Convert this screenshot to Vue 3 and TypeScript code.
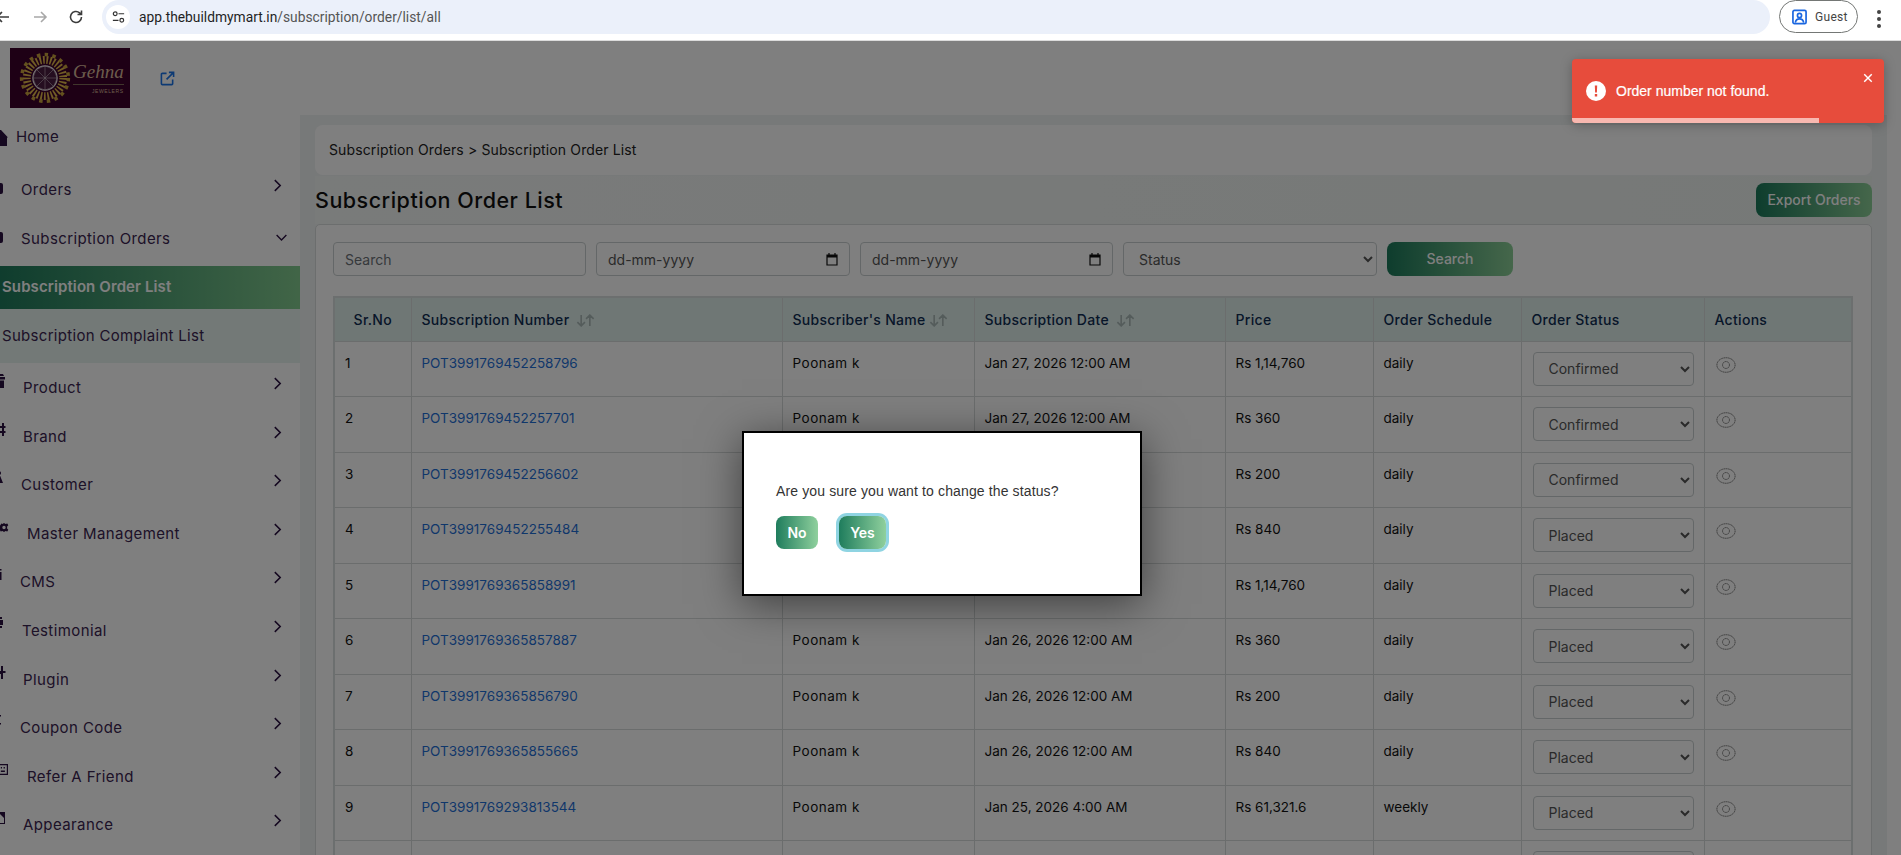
<script setup lang="ts">
interface Row { no: number; num: string; name: string; date: string; price: string; sched: string; status: string }
const rows: Row[] = [
  { no: 1, num: 'POT3991769452258796', name: 'Poonam k', date: 'Jan 27, 2026 12:00 AM', price: 'Rs 1,14,760', sched: 'daily', status: 'Confirmed' },
  { no: 2, num: 'POT3991769452257701', name: 'Poonam k', date: 'Jan 27, 2026 12:00 AM', price: 'Rs 360', sched: 'daily', status: 'Confirmed' },
  { no: 3, num: 'POT3991769452256602', name: '', date: '', price: 'Rs 200', sched: 'daily', status: 'Confirmed' },
  { no: 4, num: 'POT3991769452255484', name: '', date: '', price: 'Rs 840', sched: 'daily', status: 'Placed' },
  { no: 5, num: 'POT3991769365858991', name: '', date: '', price: 'Rs 1,14,760', sched: 'daily', status: 'Placed' },
  { no: 6, num: 'POT3991769365857887', name: 'Poonam k', date: 'Jan 26, 2026 12:00 AM', price: 'Rs 360', sched: 'daily', status: 'Placed' },
  { no: 7, num: 'POT3991769365856790', name: 'Poonam k', date: 'Jan 26, 2026 12:00 AM', price: 'Rs 200', sched: 'daily', status: 'Placed' },
  { no: 8, num: 'POT3991769365855665', name: 'Poonam k', date: 'Jan 26, 2026 12:00 AM', price: 'Rs 840', sched: 'daily', status: 'Placed' },
  { no: 9, num: 'POT3991769293813544', name: 'Poonam k', date: 'Jan 25, 2026 4:00 AM', price: 'Rs 61,321.6', sched: 'weekly', status: 'Placed' },
]
const menuA = [
  { label: 'Product', cls: 'i23', icon: 'M-6 3h11v2.500H-6zM-6 6.500H4V14H-6zM-4 0H3l1 2h-8z' },
  { label: 'Brand', cls: 'i23', icon: 'M2 0h2v3h1.500v2H4v3h1.500v2H4v3H2v-3H-3V8h5V5h-5V3h5z' },
  { label: 'Customer', cls: 'i21', icon: 'M-1 0a1.800 1.800 0 1 1 0 4 1.800 1.800 0 0 1 0-4zM-3 12l2-7h1.200L3 12z' },
  { label: 'Master Management', cls: 'i27', icon: 'M4 3l1.500 1 1.800-.4 1 1.700-1.200 1.300v1.800l1.200 1.300-1 1.700-1.800-.4L4 12l-1.500-1-1.800.4-1-1.700L-1 8.400V6.600L.3 5.300l1-1.700 1.200.4zM4 5.800a1.700 1.700 0 1 0 0 3.400 1.700 1.700 0 0 0 0-3.400z' },
  { label: 'CMS', cls: 'i20', icon: 'M-2 1h3.500v1.500H-2zM-2 4h3.500v8H-2z' },
  { label: 'Testimonial', cls: 'i22', icon: 'M-3 3h6v5H-3zM0 0h2v2H0zM0 9h2v2H0z' },
  { label: 'Plugin', cls: 'i23', icon: 'M1 0h2v5h2.500v2H3v6H1V8H-3V5h4z' },
  { label: 'Coupon Code', cls: 'i20', icon: 'M-2 1h3v1.500h-3zM-2 5h2v1.500h-2zM-2 9h3v1.500h-3z' },
  { label: 'Refer A Friend', cls: 'i27', icon: 'M-2 1h10v11H-2zM-.8 2.200v8.600h7.600V2.200zM.8 4H2v1.500H.8zM3.600 4h1.300v1.500H3.600zM.8 7.500h4.100V9H.8z' },
  { label: 'Appearance', cls: 'i23', icon: 'M-5 1H5v12H-5zM-4 7l4-4 4 4v5h-8z' },
]
const heads = ['Subscription Number', "Subscriber's Name", 'Subscription Date']
</script>

<template>
  <div class="root">
    <div class="chrome">
      <svg class="nav back" viewBox="0 0 16 16"><path d="M14 8H2M7 3 2 8l5 5" /></svg>
      <svg class="nav fwd" viewBox="0 0 16 16"><path d="M2 8h12M9 3l5 5-5 5" /></svg>
      <svg class="nav reload" viewBox="0 0 16 16"><path d="M13.500 8A5.500 5.500 0 1 1 11.600 3.800L13.500 5.500M13.500 1.500v4h-4" /></svg>
      <div class="pill">
        <span class="tune">
          <svg viewBox="0 0 16 16"><circle cx="4.500" cy="4" r="2" /><path d="M8 4h6M2 11h6" /><circle cx="11.500" cy="11" r="2" /></svg>
        </span>
        <span class="url"><b>app.thebuildmymart.in</b>/subscription/order/list/all</span>
      </div>
      <div class="guest">
        <svg viewBox="0 0 16 16"><rect x="1" y="1" width="14" height="14" rx="1.500" /><circle cx="8" cy="6.300" r="2.200" /><path d="M3.500 14c.6-3 2.400-4 4.500-4s3.900 1 4.500 4" /></svg>
        <span>Guest</span>
      </div>
      <div class="dots"><i></i><i></i><i></i></div>
    </div>

    <div class="page">
      <aside class="side">
        <div class="top">
          <div class="logo">
            <svg viewBox="0 0 60 60" class="mandala">
              <circle cx="30" cy="30" r="21" fill="none" stroke="#e0b84a" stroke-width="9" stroke-dasharray="2 2" />
              <circle cx="30" cy="30" r="27" fill="none" stroke="#c9a23c" stroke-width="4" stroke-dasharray="4 5" />
              <circle cx="30" cy="30" r="14" fill="#4a1c40" stroke="#efe6ea" stroke-width="1.300" />
              <path d="M30 16 40 20 44 30 40 40 30 44 20 40 16 30 20 20Z M20 20 40 40 M40 20 20 40 M30 16V44M16 30H44" fill="none" stroke="#d8ccd2" stroke-width=".6" />
            </svg>
            <div class="brand"><span class="gehna">Gehna</span><span class="jew">JEWELERS</span></div>
          </div>
          <svg class="ext" viewBox="0 0 16 16"><path d="M7 2.500H2.500a1 1 0 0 0-1 1v10a1 1 0 0 0 1 1h10a1 1 0 0 0 1-1V9M9.500 1.500h5v5M14.500 1.500 7 9" /></svg>
        </div>
        <div class="m home">
          <svg class="mi" viewBox="0 0 8 16"><path d="M1 0 8 7.500H7V16H-6V0z" /></svg>
          <span>Home</span>
        </div>
        <div class="m orders">
          <span class="stub"></span><span class="lb">Orders</span>
          <svg class="chev" viewBox="0 0 10 16"><path d="m2 2 6 6-6 6" /></svg>
        </div>
        <div class="m subs">
          <span class="stub"></span><span class="lb">Subscription Orders</span>
          <svg class="chev down" viewBox="0 0 16 10"><path d="m2 2 6 6 6-6" /></svg>
        </div>
        <div class="active">Subscription Order List</div>
        <div class="sub2">Subscription Complaint List</div>
        <div v-for="m in menuA" :key="m.label" class="m it" :class="m.cls">
          <svg class="mic" viewBox="0 0 12 14"><path :d="m.icon" fill-rule="evenodd" /></svg>
          <span class="lb">{{ m.label }}</span>
          <svg class="chev" viewBox="0 0 10 16"><path d="m2 2 6 6-6 6" /></svg>
        </div>
      </aside>

      <div class="right">
        <div class="rtop"></div>
        <main class="main">
          <div class="crumb">Subscription Orders &gt; Subscription Order List</div>
          <div class="titlebar">
            <h1>Subscription Order List</h1>
            <button class="grad export">Export Orders</button>
          </div>
          <section class="card">
            <div class="filters">
              <input class="fld" placeholder="Search" />
              <div class="fld date wide">dd-mm-yyyy
                <svg viewBox="0 0 12 14"><path d="M1 3h10v10H1zM3 1v2M9 1v2" /><path class="fill" d="M1 3h10v2.500H1z" /></svg>
              </div>
              <div class="fld date">dd-mm-yyyy
                <svg viewBox="0 0 12 14"><path d="M1 3h10v10H1zM3 1v2M9 1v2" /><path class="fill" d="M1 3h10v2.500H1z" /></svg>
              </div>
              <select class="fld status"><option>Status</option></select>
              <button class="grad go">Search</button>
            </div>
            <table>
              <thead>
                <tr>
                  <th class="c0 ctr">Sr.No</th>
                  <th v-for="(h, i) in heads" :key="h" :class="'c' + (i + 1)">
                    {{ h }}
                    <svg class="sort" viewBox="0 0 18 12"><path d="M5 1v10M1.500 7.500 5 11l3.500-3.500M13 11V1M9.500 4.500 13 1l3.500 3.500" /></svg>
                  </th>
                  <th class="c4">Price</th>
                  <th class="c5">Order Schedule</th>
                  <th class="c6">Order Status</th>
                  <th class="c7">Actions</th>
                </tr>
              </thead>
              <tbody>
                <tr v-for="r in rows" :key="r.no">
                  <td>{{ r.no }}</td>
                  <td><a>{{ r.num }}</a></td>
                  <td class="who">{{ r.name }}</td>
                  <td>{{ r.date }}</td>
                  <td>{{ r.price }}</td>
                  <td>{{ r.sched }}</td>
                  <td class="sel"><select><option>{{ r.status }}</option></select></td>
                  <td>
                    <svg class="eye" viewBox="0 0 22 18"><ellipse cx="11" cy="9" rx="10" ry="8" /><circle cx="11" cy="9" r="3.800" /></svg>
                  </td>
                </tr>
                <tr>
                  <td></td><td></td><td></td><td></td><td></td><td></td>
                  <td class="sel"><select><option>Placed</option></select></td>
                  <td></td>
                </tr>
              </tbody>
            </table>
          </section>
        </main>
      </div>

      <div class="backdrop"></div>

      <div class="modal">
        <p>Are you sure you want to change the status?</p>
        <div class="mbtns">
          <button class="mb no">No</button>
          <button class="mb yes">Yes</button>
        </div>
      </div>

      <div class="toast">
        <svg class="bang" viewBox="0 0 20 20"><circle cx="10" cy="10" r="10" fill="#fff" /><path d="M8.800 4.500h2.400l-.3 7H9.100zM8.800 13h2.400v2.400H8.800z" fill="#e74c3c" /></svg>
        <span>Order number not found.</span>
        <svg class="x" viewBox="0 0 12 12"><path d="m1.500 1.500 9 9M10.500 1.500l-9 9" /></svg>
        <div class="bar"></div>
      </div>
    </div>
  </div>
</template>

<style>
html, body { margin: 0; height: 100%; overflow: hidden; background: #fff; }
</style>

<style scoped>
.root { width: 1901px; height: 855px; overflow: hidden; display: flex; flex-direction: column; font-family: Inter, "Open Sans", sans-serif; color: #2a1a3a; }
.chrome { height: 40px; flex: none; display: flex; align-items: flex-start; background: #fff; border-bottom: 1px solid #dcdcdc; position: relative; }
.nav { width: 16px; height: 16px; margin-top: 9px; fill: none; stroke: #3c3c3c; stroke-width: 1.6; flex: none; }
.back { margin-left: -5px; }
.fwd { margin-left: 21px; stroke: #a8a8a8; }
.reload { margin-left: 20px; }
.pill { margin-left: 18px; width: 1668px; height: 34px; background: #ebf0fa; border-radius: 17px; display: flex; align-items: center; padding-left: 4px; box-sizing: border-box; flex: none; }
.tune { width: 24px; height: 24px; border-radius: 50%; background: #fff; display: flex; align-items: center; justify-content: center; margin-right: 9px; flex: none; }
.tune svg { width: 15px; height: 15px; fill: none; stroke: #333; stroke-width: 1.3; }
.url { font: 13.800px Roboto, sans-serif; color: #555; }
.url b { font-weight: 400; color: #1f1f1f; }
.guest { margin-left: 9px; width: 79px; height: 33px; border: 1px solid #747775; border-radius: 17px; box-sizing: border-box; display: flex; align-items: center; padding-left: 12px; gap: 8px; font: 12px Roboto, sans-serif; letter-spacing: .3px; color: #444; flex: none; }
.guest svg { width: 15px; height: 16px; fill: none; stroke: #1a66e0; stroke-width: 1.800; flex: none; }
.dots { margin-left: 19px; margin-top: 10px; display: flex; flex-direction: column; gap: 3px; }
.dots i { width: 4px; height: 4px; border-radius: 50%; background: #444; display: block; }

.page { flex: 1; display: flex; position: relative; min-height: 0; }
.side { width: 300px; flex: none; background: #fff; overflow: hidden; }
.top { height: 74px; display: flex; align-items: flex-start; }
.logo { margin: 7px 0 0 10px; width: 120px; height: 60px; background: #3c002a; display: flex; align-items: center; flex: none; }
.mandala { width: 52px; height: 52px; margin-left: 9px; flex: none; }
.brand { display: flex; flex-direction: column; align-items: flex-end; margin-left: 2px; color: #d8b898; }
.gehna { font: italic 19px/20px "Liberation Serif", serif; border-bottom: 1px solid #806c58; padding: 0 0 2px; }
.jew { font: 5px/8px "Liberation Sans", sans-serif; letter-spacing: .6px; margin-top: 2px; }
.ext { width: 15px; height: 15px; margin: 30px 0 0 30px; fill: none; stroke: #1a74e8; stroke-width: 1.700; flex: none; }

.m { position: relative; font-size: 15px; letter-spacing: .4px; line-height: 22px; color: #3b2450; }
.home { padding-left: 16px; display: flex; align-items: flex-start; padding-top: 11px; box-sizing: border-box; height: 48px; letter-spacing: .2px; }
.mi { position: absolute; left: 0; top: 15px; width: 8px; height: 16px; fill: #2a1040; }
.orders { height: 53px; padding: 16px 0 0 21px; box-sizing: border-box; }
.subs { height: 50px; padding: 12px 0 0 21px; box-sizing: border-box; }
.stub { position: absolute; left: -3px; top: 20px; width: 6px; height: 11px; border-radius: 2px; background: #2a1040; }
.subs .stub { top: 16px; }
.chev { position: absolute; left: 273px; top: 13px; width: 9px; height: 15px; fill: none; stroke: #2a1040; stroke-width: 1.700; }
.orders .chev { top: 15px; }
.chev.down { left: 275px; top: 17px; width: 13px; height: 9px; }
.active { height: 43px; background: linear-gradient(90deg, #1f7a5c, #83cb8f); color: #fff; font-weight: 600; font-size: 15px; letter-spacing: .1px; line-height: 41px; padding-left: 2px; }
.sub2 { height: 54px; background: #e6f2ee; font-size: 15px; letter-spacing: .3px; line-height: 54px; padding-left: 2px; color: #3b2450; }
.it { height: 48.600px; padding-top: 14px; box-sizing: border-box; }
.mic { position: absolute; left: 0; top: 11px; width: 12px; height: 14px; fill: #2a1040; overflow: hidden; }
.i20 { padding-left: 20px; }
.i21 { padding-left: 21px; }
.i22 { padding-left: 22px; }
.i23 { padding-left: 23px; }
.i27 { padding-left: 27px; }

.right { flex: 1; min-width: 0; display: flex; flex-direction: column; background: #fff; }
.rtop { height: 74px; flex: none; }
.main { flex: 1; min-height: 0; background: #eff3f3; padding: 10px 15px 0 15px; margin-right: 14px; }
.crumb { height: 50px; background: #fff; border-radius: 8px; padding-left: 14px; line-height: 50px; font-size: 14px; letter-spacing: .13px; color: #222; box-sizing: border-box; margin-bottom: 1px; }
.titlebar { height: 48px; display: flex; align-items: center; justify-content: space-between; background: linear-gradient(90deg, #f3f6f5, #edf2ef); }
h1 { margin: 0; font-size: 21.500px; letter-spacing: .5px; font-weight: 500; color: #111; }
.grad { border: 0; color: #fff; font-family: inherit; font-weight: 500; background: linear-gradient(90deg, #1c7a5b, #8bce96); }
.export { width: 116px; height: 34px; border-radius: 8px; font-size: 14px; padding: 0 0 2px; }
.card { background: #fff; border: 1px solid #d8dcdc; border-radius: 5px; padding: 17px 17px 0; height: 700px; box-sizing: border-box; }
.filters { display: flex; gap: 10px; height: 34px; }
.fld { box-sizing: border-box; width: 253px; height: 34px; border: 1px solid #c9ced0; border-radius: 4px; background: #fff; font-family: inherit; font-size: 14px; color: #555; padding: 0 11px; flex: none; outline: 0; }
.fld::placeholder { color: #6d7278; }
.date { display: flex; align-items: center; justify-content: space-between; }
.wide { width: 254px; }
.date svg { width: 12px; height: 14px; fill: none; stroke: #111; stroke-width: 1.200; }
.date .fill { fill: #111; stroke: none; }
.status { width: 254px; }
.go { width: 126px; height: 34px; border-radius: 8px; font-size: 14px; padding: 0 0 1px; }
table { margin-top: 20px; width: 1520px; border-collapse: collapse; table-layout: fixed; font-size: 13.500px; border: 2px solid #d9dede; }
th, td { border: 1px solid #d6dbdb; text-align: left; vertical-align: top; box-sizing: border-box; }
th { height: 44px; background: #dfeeeb; color: #0f2d52; font-size: 14px; letter-spacing: .3px; font-weight: 500; padding: 0 10px; vertical-align: middle; white-space: nowrap; }
td { height: 55.500px; padding: 11px 10px 0; color: #111; white-space: nowrap; line-height: 20px; }
.who { letter-spacing: .5px; }
.ctr { text-align: center; }
.c0 { width: 77px; }
.c1 { width: 371px; }
.c2 { width: 192px; }
.c3 { width: 251px; }
.c4 { width: 148px; }
.c5 { width: 148px; }
.c6 { width: 183px; }
a { color: #1f6fd6; }
.sort { width: 21px; height: 13px; fill: none; stroke: #a9b8b6; stroke-width: 1.500; margin-left: 2px; vertical-align: -2px; }
.c2 .sort { margin-left: -2px; }
td.sel { padding: 10px 10px 0 11px; }
.sel select { width: 161px; height: 34px; box-sizing: border-box; border: 1px solid #c9ced0; border-radius: 4px; background: #fff; font-family: inherit; font-size: 14px; color: #555; padding: 0 11px; outline: 0; display: block; }
.eye { width: 20px; height: 18px; fill: none; stroke: #6a6a6a; stroke-width: 1; stroke-dasharray: 1.500 .5; display: block; margin: 3px 0 0 1px; }

.backdrop { position: absolute; inset: 0; background: rgba(0, 0, 0, .5); }
.modal { position: absolute; left: 742px; top: 390px; width: 400px; height: 165px; box-sizing: border-box; background: #fff; border: 2px solid #000; box-shadow: 0 8px 40px rgba(0, 0, 0, .5); padding: 48px 32px 0; font-family: "Liberation Sans", sans-serif; }
.modal p { margin: 0; font-size: 14px; letter-spacing: .13px; line-height: 20px; color: #333; }
.mbtns { display: flex; gap: 21px; margin-top: 15px; }
.mb { height: 33px; border: 0; border-radius: 8px; color: #fff; font: 600 14px Inter, sans-serif; background: linear-gradient(90deg, #1f7d5d, #8fd09d); padding: 0; }
.no { width: 42px; }
.yes { width: 47px; box-shadow: 0 0 0 3px #8fd4e2; }
.toast { position: absolute; left: 1572px; top: 18px; width: 312px; height: 64px; background: #e74c3c; border-radius: 4px; box-shadow: 0 2px 12px rgba(0, 0, 0, .25); color: #fff; font: 14px "Liberation Sans", sans-serif; -webkit-text-stroke: .2px #fff; display: flex; align-items: center; padding-left: 14px; box-sizing: border-box; gap: 10px; overflow: hidden; }
.bang { width: 20px; height: 20px; flex: none; }
.x { position: absolute; right: 11px; top: 14px; width: 10px; height: 10px; fill: none; stroke: #fff; stroke-width: 1.700; }
.bar { position: absolute; left: 0; bottom: 0; width: 247px; height: 5px; background: #f8b8b0; }
</style>
